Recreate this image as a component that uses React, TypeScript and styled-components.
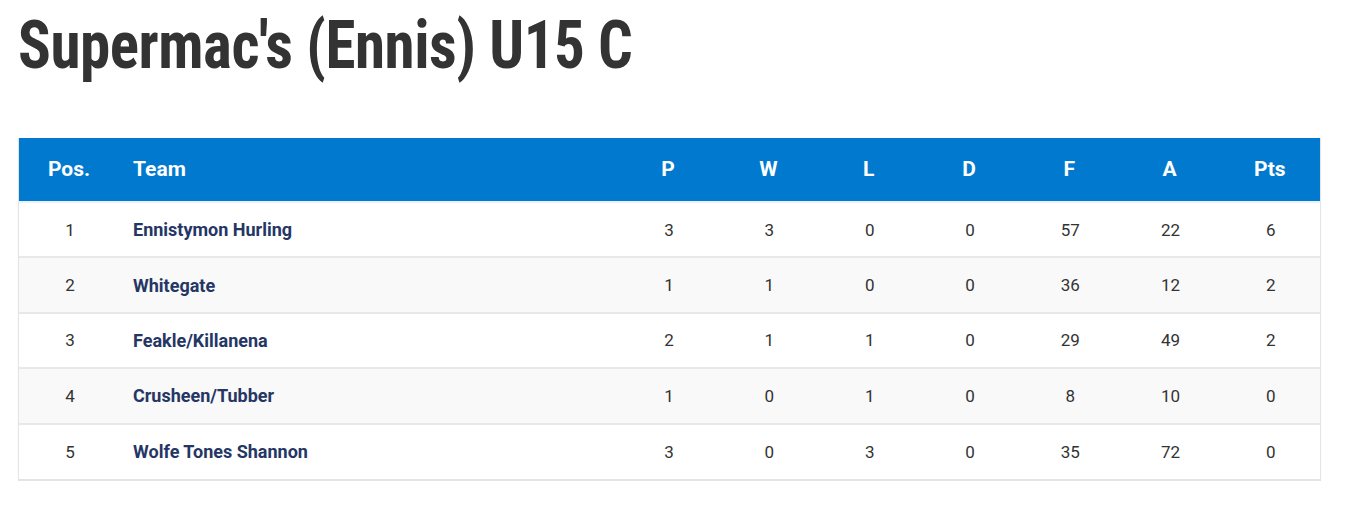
import React from "react";
import styled, { createGlobalStyle } from "styled-components";

const GlobalStyle = createGlobalStyle`
  html, body { margin: 0; padding: 0; background: #ffffff; }
  body { font-family: Roboto, "Liberation Sans", sans-serif; }
  * { box-sizing: border-box; }
`;

const Page = styled.div`
  padding: 8px 24px 0 18px;
  width: 1345px;
`;

const Title = styled.h1`
  margin: 0 0 54px 0;
  font-family: "Roboto Condensed", Roboto, sans-serif;
  font-weight: 700;
  font-size: 66px;
  line-height: 76px;
  color: #333333;
  letter-spacing: -0.5px;
  transform: scaleX(0.925);
  transform-origin: left center;
  white-space: nowrap;
`;

const Table = styled.div`
  width: 1303px;
  border: 1px solid #e4e4e4;
  border-top: none;
  box-shadow: 0 1px 2px rgba(0, 0, 0, 0.04);
`;

const Row = styled.div<{ $head?: boolean; $alt?: boolean }>`
  display: grid;
  grid-template-columns: 100px 1fr repeat(7, 100.3px);
  align-items: center;
  height: ${(p) => (p.$head ? "65px" : "55.4px")};
  background: ${(p) => (p.$head ? "#0079cf" : p.$alt ? "#f9f9f9" : "#ffffff")};
  border-bottom: 2px solid ${(p) => (p.$head ? "#e9f2fa" : "#e8e8e8")};
  &:last-child { border-bottom: 1px solid #e4e4e4; }
`;

const HeadCell = styled.div<{ $left?: boolean }>`
  color: #ffffff;
  font-weight: 700;
  font-size: 21px;
  text-align: ${(p) => (p.$left ? "left" : "center")};
  padding-left: ${(p) => (p.$left ? "14px" : "0")};
  padding-bottom: 2px;
`;

const Cell = styled.div`
  color: #333333;
  font-size: 17px;
  text-align: center;
  padding-left: 2px;
`;

const TeamCell = styled.div`
  color: #253665;
  font-weight: 700;
  font-size: 18px;
  padding-left: 14px;
`;

const heads = ["P", "W", "L", "D", "F", "A", "Pts"];

const rows: [string, number[]][] = [
  ["Ennistymon Hurling", [3, 3, 0, 0, 57, 22, 6]],
  ["Whitegate", [1, 1, 0, 0, 36, 12, 2]],
  ["Feakle/Killanena", [2, 1, 1, 0, 29, 49, 2]],
  ["Crusheen/Tubber", [1, 0, 1, 0, 8, 10, 0]],
  ["Wolfe Tones Shannon", [3, 0, 3, 0, 35, 72, 0]],
];

export default function App() {
  return (
    <>
      <GlobalStyle />
      <Page>
        <Title>Supermac's (Ennis) U15 C</Title>
        <Table>
          <Row $head>
            <HeadCell>Pos.</HeadCell>
            <HeadCell $left>Team</HeadCell>
            {heads.map((h) => (
              <HeadCell key={h}>{h}</HeadCell>
            ))}
          </Row>
          {rows.map(([team, vals], i) => (
            <Row key={team} $alt={i % 2 === 1}>
              <Cell>{i + 1}</Cell>
              <TeamCell>{team}</TeamCell>
              {vals.map((v, j) => (
                <Cell key={j}>{v}</Cell>
              ))}
            </Row>
          ))}
        </Table>
      </Page>
    </>
  );
}
